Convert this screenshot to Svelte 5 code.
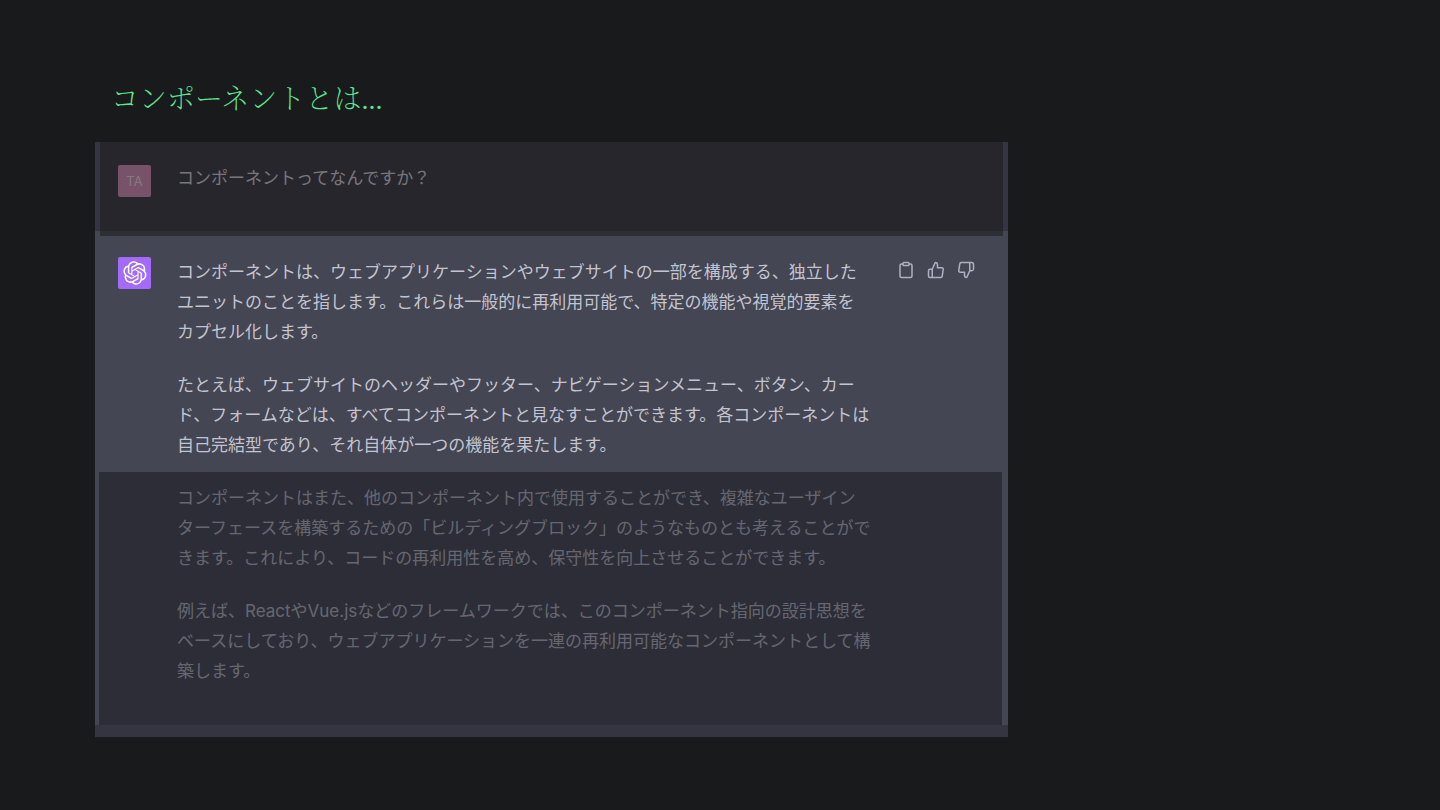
<script lang="ts">
	const question = 'コンポーネントってなんですか？';

	const answer = [
		[
			'コンポーネントは、ウェブアプリケーションやウェブサイトの一部を構成する、独立した',
			'ユニットのことを指します。これらは一般的に再利用可能で、特定の機能や視覚的要素を',
			'カプセル化します。'
		],
		[
			'たとえば、ウェブサイトのヘッダーやフッター、ナビゲーションメニュー、ボタン、カー',
			'ド、フォームなどは、すべてコンポーネントと見なすことができます。各コンポーネントは',
			'自己完結型であり、それ自体が一つの機能を果たします。'
		],
		[
			'コンポーネントはまた、他のコンポーネント内で使用することができ、複雑なユーザイン',
			'ターフェースを構築するための「ビルディングブロック」のようなものとも考えることがで',
			'きます。これにより、コードの再利用性を高め、保守性を向上させることができます。'
		],
		[
			'例えば、ReactやVue.jsなどのフレームワークでは、このコンポーネント指向の設計思想を',
			'ベースにしており、ウェブアプリケーションを一連の再利用可能なコンポーネントとして構',
			'築します。'
		]
	];

	const actions = [
		{
			label: 'コピー',
			path: 'M16 4h2a2 2 0 0 1 2 2v14a2 2 0 0 1-2 2H6a2 2 0 0 1-2-2V6a2 2 0 0 1 2-2h2M9 2h6a1 1 0 0 1 1 1v2a1 1 0 0 1-1 1H9a1 1 0 0 1-1-1V3a1 1 0 0 1 1-1z'
		},
		{
			label: '良い回答',
			path: 'M14 9V5a3 3 0 0 0-3-3l-4 9v11h11.28a2 2 0 0 0 2-1.7l1.38-9a2 2 0 0 0-2-2.3zM7 22H4a2 2 0 0 1-2-2v-7a2 2 0 0 1 2-2h3'
		},
		{
			label: '良くない回答',
			path: 'M10 15v4a3 3 0 0 0 3 3l4-9V2H5.72a2 2 0 0 0-2 1.7l-1.38 9a2 2 0 0 0 2 2.3zM17 2h2.67A2.31 2.31 0 0 1 22 4v7a2.31 2.31 0 0 1-2.33 2H17'
		}
	];
</script>

<main>
	<h1>コンポーネントとは...</h1>

	<div class="chat">
		<section class="row user">
			<div class="avatar">TA</div>
			<p class="question">{question}</p>
			<div class="dim"></div>
		</section>

		<section class="row assistant">
			<div class="avatar">
				<svg viewBox="0 0 41 41" fill="currentColor" aria-hidden="true">
					<path
						d="M37.5324 16.8707C37.9808 15.5241 38.1363 14.0974 37.9886 12.6859C37.8409 11.2744 37.3934 9.91076 36.676 8.68622C35.6126 6.83404 33.9882 5.3676 32.0373 4.4985C30.0864 3.62941 27.9098 3.40259 25.8215 3.85078C24.8796 2.7893 23.7219 1.94125 22.4257 1.36341C21.1295 0.785575 19.7249 0.491269 18.3058 0.500197C16.1708 0.495044 14.0893 1.16803 12.3614 2.42214C10.6335 3.67624 9.34853 5.44666 8.6917 7.47815C7.30085 7.76286 5.98686 8.3414 4.8377 9.17505C3.68854 10.0087 2.73073 11.0782 2.02839 12.312C0.956464 14.1591 0.498905 16.2988 0.721698 18.4228C0.944492 20.5467 1.83612 22.5449 3.268 24.1293C2.81966 25.4759 2.66413 26.9026 2.81182 28.3141C2.95951 29.7256 3.40701 31.0892 4.12437 32.3138C5.18791 34.1659 6.8123 35.6322 8.76321 36.5013C10.7141 37.3704 12.8907 37.5973 14.9789 37.1492C15.9208 38.2107 17.0786 39.0587 18.3747 39.6366C19.6709 40.2144 21.0755 40.5087 22.4946 40.4998C24.6307 40.5054 26.7133 39.8321 28.4418 38.5772C30.1704 37.3223 31.4556 35.5506 32.1119 33.5179C33.5027 33.2332 34.8167 32.6547 35.9659 31.821C37.115 30.9874 38.0728 29.9178 38.7752 28.684C39.8458 26.8371 40.3023 24.6979 40.0789 22.5748C39.8556 20.4517 38.9639 18.4544 37.5324 16.8707ZM22.4978 37.8849C20.7443 37.8874 19.0459 37.2733 17.6994 36.1501C17.7601 36.117 17.8666 36.0586 17.936 36.0161L25.9004 31.4156C26.1003 31.3019 26.2663 31.137 26.3813 30.9378C26.4964 30.7386 26.5563 30.5124 26.5549 30.2825V19.0542L29.9213 20.998C29.9389 21.0068 29.9541 21.0198 29.9656 21.0359C29.977 21.052 29.9842 21.0707 29.9867 21.0902V30.3889C29.9842 32.375 29.1946 34.2791 27.7909 35.6841C26.3872 37.0892 24.4838 37.8806 22.4978 37.8849ZM6.39227 31.0064C5.51397 29.4888 5.19742 27.7107 5.49804 25.9832C5.55718 26.0187 5.66048 26.0818 5.73461 26.1244L13.699 30.7248C13.8975 30.8408 14.1233 30.902 14.3532 30.902C14.583 30.902 14.8088 30.8408 15.0073 30.7248L24.731 25.1103V28.9979C24.7321 29.0177 24.7283 29.0376 24.7199 29.0556C24.7115 29.0736 24.6988 29.0893 24.6829 29.1012L16.6317 33.7497C14.9096 34.7416 12.8643 35.0097 10.9447 34.4954C9.02506 33.9811 7.38785 32.7263 6.39227 31.0064ZM4.29707 13.6194C5.17156 12.0998 6.55279 10.9364 8.19885 10.3327C8.19885 10.4013 8.19491 10.5228 8.19491 10.6071V19.808C8.19351 20.0378 8.25334 20.2638 8.36823 20.4629C8.48312 20.6619 8.64893 20.8267 8.84863 20.9404L18.5723 26.5542L15.206 28.4979C15.1894 28.5089 15.1703 28.5155 15.1505 28.5173C15.1307 28.5191 15.1107 28.516 15.0924 28.5082L7.04046 23.8557C5.32135 22.8601 4.06716 21.2235 3.55289 19.3046C3.03862 17.3858 3.30624 15.3413 4.29707 13.6194ZM31.955 20.0556L22.2312 14.4411L25.5976 12.4981C25.6142 12.4872 25.6333 12.4805 25.6531 12.4787C25.6729 12.4769 25.6928 12.4801 25.7111 12.4879L33.7631 17.1364C34.9967 17.849 36.0017 18.8982 36.6606 20.1613C37.3194 21.4244 37.6047 22.849 37.4832 24.2684C37.3617 25.6878 36.8382 27.0432 35.9743 28.1759C35.1103 29.3086 33.9415 30.1717 32.6047 30.6641C32.6047 30.5947 32.6047 30.4733 32.6047 30.3889V21.188C32.6066 20.9586 32.5474 20.7328 32.4332 20.5338C32.319 20.3348 32.154 20.1698 31.955 20.0556ZM35.3055 15.0128C35.2464 14.9765 35.1431 14.9142 35.069 14.8717L27.1045 10.2712C26.906 10.1554 26.6803 10.0943 26.4504 10.0943C26.2206 10.0943 25.9948 10.1554 25.7963 10.2712L16.0726 15.8858V11.9982C16.0715 11.9783 16.0753 11.9585 16.0837 11.9405C16.0921 11.9225 16.1048 11.9068 16.1207 11.8949L24.1719 7.25025C25.4053 6.53903 26.8158 6.19376 28.2383 6.25482C29.6608 6.31589 31.0364 6.78077 32.2044 7.59508C33.3723 8.40939 34.2842 9.53945 34.8334 10.8531C35.3826 12.1667 35.5464 13.6095 35.3055 15.0128ZM14.2424 21.9419L10.8752 19.9981C10.8576 19.9893 10.8423 19.9763 10.8309 19.9602C10.8195 19.9441 10.8122 19.9254 10.8098 19.9058V10.6071C10.8107 9.18295 11.2173 7.78848 11.9819 6.58696C12.7466 5.38544 13.8377 4.42659 15.1275 3.82264C16.4173 3.21869 17.8524 2.99464 19.2649 3.1767C20.6775 3.35876 22.0089 3.93941 23.1034 4.85067C23.0427 4.88379 22.937 4.94215 22.8668 4.98473L14.9024 9.58517C14.7025 9.69878 14.5366 9.86356 14.4215 10.0626C14.3065 10.2616 14.2466 10.4877 14.2479 10.7175L14.2424 21.9419ZM16.071 17.9991L20.4018 15.4978L24.7325 17.9975V22.9985L20.4018 25.4983L16.071 22.9985V17.9991Z"
					/>
				</svg>
			</div>
			<div class="answer">
				{#each answer as lines}
					<p>{lines.join('\n')}</p>
				{/each}
			</div>
			<div class="actions">
				{#each actions as action}
					<button type="button" aria-label={action.label}>
						<svg viewBox="0 0 24 24" aria-hidden="true">
							<path d={action.path} />
						</svg>
					</button>
				{/each}
			</div>
			<div class="dim"></div>
		</section>
	</div>
</main>

<style>
	:global(body) {
		margin: 0;
		background: #191a1c;
	}

	main {
		padding: 80px 95px 73px;
	}

	h1 {
		margin: 0 0 22px;
		padding-left: 16px;
		font-family: 'Liberation Serif', 'Noto Serif CJK JP', 'Noto Sans CJK JP', serif;
		font-size: 28px;
		font-weight: 100;
		line-height: 40px;
		color: #5fe38f;
	}

	.chat {
		max-width: 913px;
		padding-bottom: 12px;
		background: #353541;
		font-family: Inter, 'Noto Sans CJK JP', sans-serif;
		font-size: 17px;
		line-height: 30px;
		color: #c3c4d0;
	}

	.row {
		position: relative;
		display: flex;
		align-items: flex-start;
		padding: 23px 33px 34px 23px;
	}

	.user {
		z-index: 1;
		color: #dcdce2;
	}

	.assistant {
		padding-top: 26px;
		padding-bottom: 39px;
		background: #444653;
	}

	.avatar {
		display: flex;
		flex: none;
		align-items: center;
		justify-content: center;
		width: 33px;
		height: 32px;
		margin-right: 26px;
		border-radius: 2px;
		font-size: 13px;
		color: #f4e4f0;
		background: #dd90bc;
	}

	.assistant .avatar {
		color: #fff;
		background: #a46bf8;
	}

	.avatar svg {
		width: 24px;
		height: 24px;
	}

	p {
		margin: 0 0 23px;
		white-space: pre-line;
	}

	p:last-child {
		margin-bottom: 0;
	}

	.question {
		margin: 0;
		line-height: 26px;
	}

	.answer {
		flex: 1;
		min-width: 0;
	}

	.actions {
		display: flex;
		flex: none;
		gap: 12px;
		margin: 4px 0 0 12px;
	}

	button {
		display: flex;
		padding: 0;
		border: 0;
		color: #b0b1c0;
		background: none;
		cursor: pointer;
	}

	button svg {
		width: 18px;
		height: 18px;
		fill: none;
		stroke: currentColor;
		stroke-width: 2;
		stroke-linecap: round;
		stroke-linejoin: round;
	}

	/* Fades the parts that are not being talked about */
	.dim {
		position: absolute;
		inset: 0 5px -5px;
		background: rgba(27, 25, 26, 0.52);
		pointer-events: none;
	}

	.assistant .dim {
		inset: 241px 6px 0 4px;
		background: rgba(26, 25, 32, 0.55);
	}
</style>
